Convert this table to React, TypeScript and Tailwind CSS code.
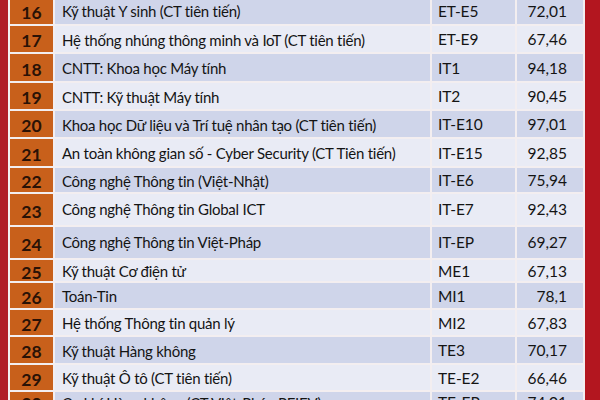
import React from "react";

type Row = { n: number; name: string; code: string; score: string; h: number };

const rows: Row[] = [
  { n: 16, name: "Kỹ thuật Y sinh (CT tiên tiến)", code: "ET-E5", score: "72,01", h: 27 },
  { n: 17, name: "Hệ thống nhúng thông minh và IoT (CT tiên tiến)", code: "ET-E9", score: "67,46", h: 26 },
  { n: 18, name: "CNTT: Khoa học Máy tính", code: "IT1", score: "94,18", h: 27 },
  { n: 19, name: "CNTT: Kỹ thuật Máy tính", code: "IT2", score: "90,45", h: 26 },
  { n: 20, name: "Khoa học Dữ liệu và Trí tuệ nhân tạo (CT tiên tiến)", code: "IT-E10", score: "97,01", h: 26 },
  { n: 21, name: "An toàn không gian số - Cyber Security (CT Tiên tiến)", code: "IT-E15", score: "92,85", h: 27 },
  { n: 22, name: "Công nghệ Thông tin (Việt-Nhật)", code: "IT-E6", score: "75,94", h: 24 },
  { n: 23, name: "Công nghệ Thông tin Global ICT", code: "IT-E7", score: "92,43", h: 31 },
  { n: 24, name: "Công nghệ Thông tin Việt-Pháp", code: "IT-EP", score: "69,27", h: 31 },
  { n: 25, name: "Kỹ thuật Cơ điện tử", code: "ME1", score: "67,13", h: 21 },
  { n: 26, name: "Toán-Tin", code: "MI1", score: "78,1", h: 25 },
  { n: 27, name: "Hệ thống Thông tin quản lý", code: "MI2", score: "67,83", h: 25 },
  { n: 28, name: "Kỹ thuật Hàng không", code: "TE3", score: "70,17", h: 26 },
  { n: 29, name: "Kỹ thuật Ô tô (CT tiên tiến)", code: "TE-E2", score: "66,46", h: 25 },
  { n: 30, name: "Cơ khí Hàng không (CT Việt-Pháp PFIEV)", code: "TE-EP", score: "74,01", h: 20 },
];

export default function App() {
  return (
    <div
      className="w-[600px] h-[400px] overflow-hidden bg-[#b3161f] flex"
      style={{ fontFamily: "Lato, 'Open Sans', sans-serif" }}
    >
      <div className="w-[8px] shrink-0 bg-[#b01c26]" />
      <div className="w-[577px] shrink-0 bg-[#f3eef0] px-[2px] flex flex-col gap-[2px] -mt-[3px]">
        {rows.map((r, i) => {
          const bg = i % 2 === 0 ? "bg-[#cfd5ea]" : "bg-[#e9ebf5]";
          const pt = r.h >= 30 ? "pt-0" : "pt-[2px]";
          return (
            <div key={r.n} className="flex gap-[2px] shrink-0" style={{ height: r.h }}>
              <div className="w-[43px] shrink-0 bg-[#c8601b] flex items-center justify-center pt-[5px] text-[17.5px] font-bold text-[#2a1206]">
                {r.n}
              </div>
              <div className={`w-[375px] shrink-0 ${bg} flex items-center pl-[7px] ${pt} text-[15px] tracking-[-0.25px] text-[#141414] whitespace-nowrap`}>
                {r.name}
              </div>
              <div className={`w-[83px] shrink-0 ${bg} flex items-center pl-[6px] ${pt} text-[15.5px] tracking-[-0.1px] text-[#141414]`}>
                {r.code}
              </div>
              <div className={`w-[66px] shrink-0 ${bg} flex items-center justify-end pr-[16px] ${pt} text-[15.5px] text-[#141414]`}>
                {r.score}
              </div>
            </div>
          );
        })}
      </div>
    </div>
  );
}
